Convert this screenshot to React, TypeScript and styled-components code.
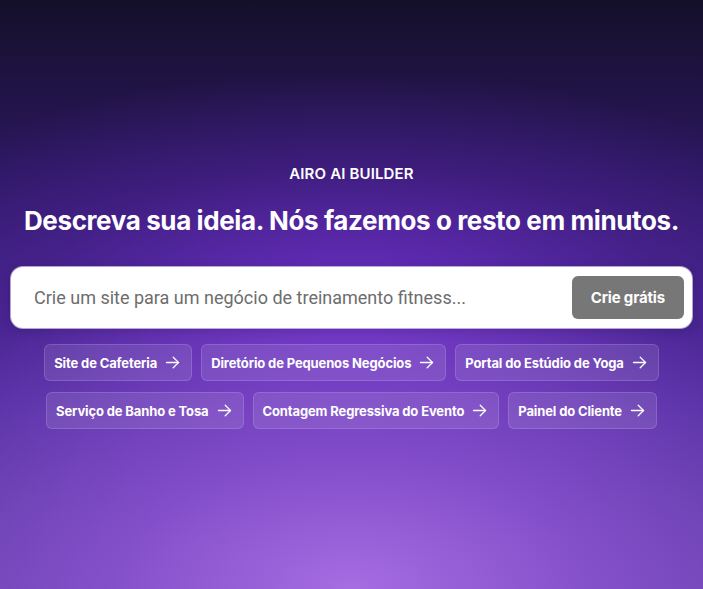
import styled, { createGlobalStyle } from "styled-components";

const GlobalStyle = createGlobalStyle`
  * { box-sizing: border-box; }
  html, body { margin: 0; padding: 0; }
  body { font-family: Inter, "Noto Sans", sans-serif; }
`;

// #region styled
const Page = styled.main`
  min-height: 100vh;
  display: flex;
  flex-direction: column;
  align-items: center;
  justify-content: center;
  padding: 4px 11px 0;
  color: #fff;
  background:
    radial-gradient(ellipse 85% 55% at 50% 100%, #a66ce2 0%, rgba(150, 90, 220, 0.7) 40%, rgba(110, 60, 200, 0) 100%),
    radial-gradient(ellipse 75% 40% at 50% 52%, rgba(112, 48, 205, 0.9) 0%, rgba(95, 40, 180, 0.35) 60%, rgba(60, 30, 120, 0) 100%),
    linear-gradient(180deg, #14102a 0%, #2c1760 30%, #4a2a95 68%, #5b3aa0 100%);
`;

const Eyebrow = styled.div`
  font-size: 15px;
  font-weight: 600;
  letter-spacing: 0.01em;
  margin-bottom: 22px;
`;

const Headline = styled.h1`
  margin: 0 0 31px;
  font-size: 26px;
  font-weight: 700;
  letter-spacing: -0.015em;
  text-align: center;
`;

const SearchBox = styled.form`
  width: 100%;
  max-width: 681px;
  height: 61px;
  display: flex;
  align-items: center;
  padding: 0 8px 0 21px;
  background: #fff;
  border-radius: 12px;
  box-shadow: 0 0 0 1px rgba(255, 255, 255, 0.6), 0 2px 10px rgba(30, 10, 70, 0.25);
`;

const Input = styled.input`
  flex: 1;
  border: none;
  outline: none;
  background: transparent;
  font-family: Roboto, "Noto Sans", sans-serif;
  font-size: 18px;
  color: #333;

  &::placeholder {
    color: #6d6d6d;
  }
`;

const Submit = styled.button`
  height: 43px;
  padding: 0 19px;
  border: none;
  border-radius: 6px;
  background: #777777;
  color: #fff;
  font-family: Inter, sans-serif;
  font-size: 15px;
  font-weight: 700;
  letter-spacing: -0.01em;
  cursor: pointer;
`;

const Chips = styled.div`
  margin-top: 16px;
  max-width: 640px;
  display: flex;
  flex-wrap: wrap;
  justify-content: center;
  gap: 11px 9px;
`;

const Chip = styled.button`
  height: 37px;
  display: flex;
  align-items: center;
  gap: 7px;
  padding: 0 10px 0 9px;
  border: 1px solid rgba(255, 255, 255, 0.14);
  border-radius: 6px;
  background: rgba(255, 255, 255, 0.1);
  color: #fff;
  font-family: Inter, sans-serif;
  font-size: 13px;
  font-weight: 700;
  letter-spacing: -0.01em;
  cursor: pointer;
`;
// #endregion styled

const Arrow = () => (
  <svg width="17" height="17" viewBox="0 0 24 24" fill="none" stroke="currentColor" strokeWidth="1.8" strokeLinecap="round" strokeLinejoin="round">
    <path d="M3.5 12h17" />
    <path d="M13 4.5l7.5 7.5-7.5 7.5" />
  </svg>
);

const ideas = [
  "Site de Cafeteria",
  "Diretório de Pequenos Negócios",
  "Portal do Estúdio de Yoga",
  "Serviço de Banho e Tosa",
  "Contagem Regressiva do Evento",
  "Painel do Cliente",
];

export default function App() {
  return (
    <>
      <GlobalStyle />
      <Page>
        <Eyebrow>AIRO AI BUILDER</Eyebrow>
        <Headline>Descreva sua ideia. Nós fazemos o resto em minutos.</Headline>
        <SearchBox onSubmit={(e) => e.preventDefault()}>
          <Input placeholder="Crie um site para um negócio de treinamento fitness..." />
          <Submit type="submit">Crie grátis</Submit>
        </SearchBox>
        <Chips>
          {ideas.map((idea) => (
            <Chip key={idea} type="button">
              {idea}
              <Arrow />
            </Chip>
          ))}
        </Chips>
      </Page>
    </>
  );
}
